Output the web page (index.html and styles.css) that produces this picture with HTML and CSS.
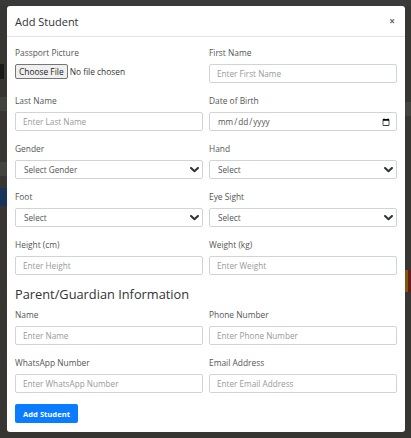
FILE: index.html
```html
<!DOCTYPE html>
<html>
<head>
<meta charset="utf-8">
<link rel="stylesheet" href="styles.css">
</head>
<body>
<div class="backdrop">
  <div class="bg-strip bg-top"></div>
  <div class="bg-strip bg-l1"></div>
  <div class="bg-strip bg-l2"></div>
  <div class="bg-strip bg-l3"></div>
  <div class="bg-strip bg-l4"></div>
  <div class="bg-strip bg-r1"></div>
  <div class="bg-strip bg-r2"></div>
</div>
<div class="modal">
  <div class="modal-header">
    <h5 class="modal-title">Add Student</h5>
    <span class="close">&times;</span>
  </div>
  <form class="modal-body">
    <div class="grid">
      <div class="field">
        <label>Passport Picture</label>
        <input type="file" class="file">
      </div>
      <div class="field">
        <label>First Name</label>
        <input type="text" class="control" placeholder="Enter First Name">
      </div>
      <div class="field">
        <label>Last Name</label>
        <input type="text" class="control" placeholder="Enter Last Name">
      </div>
      <div class="field">
        <label>Date of Birth</label>
        <input type="date" class="control date">
      </div>
      <div class="field">
        <label>Gender</label>
        <div class="select-wrap">
          <select class="control select"><option>Select Gender</option></select>
          <svg class="chev" viewBox="0 0 10 7" width="9" height="6"><path d="M1 1.2 L5 5 L9 1.2" fill="none" stroke="#333" stroke-width="2.4" stroke-linecap="round" stroke-linejoin="round"/></svg>
        </div>
      </div>
      <div class="field">
        <label>Hand</label>
        <div class="select-wrap">
          <select class="control select"><option>Select</option></select>
          <svg class="chev" viewBox="0 0 10 7" width="9" height="6"><path d="M1 1.2 L5 5 L9 1.2" fill="none" stroke="#333" stroke-width="2.4" stroke-linecap="round" stroke-linejoin="round"/></svg>
        </div>
      </div>
      <div class="field">
        <label>Foot</label>
        <div class="select-wrap">
          <select class="control select"><option>Select</option></select>
          <svg class="chev" viewBox="0 0 10 7" width="9" height="6"><path d="M1 1.2 L5 5 L9 1.2" fill="none" stroke="#333" stroke-width="2.4" stroke-linecap="round" stroke-linejoin="round"/></svg>
        </div>
      </div>
      <div class="field">
        <label>Eye Sight</label>
        <div class="select-wrap">
          <select class="control select"><option>Select</option></select>
          <svg class="chev" viewBox="0 0 10 7" width="9" height="6"><path d="M1 1.2 L5 5 L9 1.2" fill="none" stroke="#333" stroke-width="2.4" stroke-linecap="round" stroke-linejoin="round"/></svg>
        </div>
      </div>
      <div class="field">
        <label>Height (cm)</label>
        <input type="text" class="control" placeholder="Enter Height">
      </div>
      <div class="field">
        <label>Weight (kg)</label>
        <input type="text" class="control" placeholder="Enter Weight">
      </div>
    </div>
    <h4 class="section">Parent/Guardian Information</h4>
    <div class="grid">
      <div class="field">
        <label>Name</label>
        <input type="text" class="control" placeholder="Enter Name">
      </div>
      <div class="field">
        <label>Phone Number</label>
        <input type="text" class="control" placeholder="Enter Phone Number">
      </div>
      <div class="field">
        <label>WhatsApp Number</label>
        <input type="text" class="control" placeholder="Enter WhatsApp Number">
      </div>
      <div class="field">
        <label>Email Address</label>
        <input type="text" class="control" placeholder="Enter Email Address">
      </div>
    </div>
    <button type="button" class="btn">Add Student</button>
  </form>
</div>
</body>
</html>
```
FILE: styles.css
```css
* { box-sizing: border-box; }
html, body { margin: 0; padding: 0; }
body {
  width: 411px;
  height: 438px;
  overflow: hidden;
  background: #373632;
  font-family: "Open Sans", "Liberation Sans", sans-serif;
  color: #333;
  padding: 6px 6px 0 7px;
}
.backdrop { position: absolute; inset: 0; z-index: 0; }
.bg-strip { position: absolute; }
.bg-top { left: 0; top: 0; width: 411px; height: 6px; background: #3a3a3a; }
.bg-l1 { left: 0; top: 64px; width: 4px; height: 15px; background: #1a1a18; }
.bg-l2 { left: 0; top: 97px; width: 7px; height: 14px; background: #43433f; }
.bg-l3 { left: 0; top: 162px; width: 7px; height: 14px; background: #43433f; }
.bg-l4 { left: 0; top: 188px; width: 7px; height: 18px; background: #17355a; }
.bg-r1 { left: 405px; top: 102px; width: 6px; height: 14px; background: #43433f; }
.bg-r2 { left: 405px; top: 270px; width: 6px; height: 22px; background: linear-gradient(90deg, #7a5a10 0 50%, #6a1a1a 50%); }

.modal {
  position: relative;
  z-index: 1;
  width: 398px;
  height: 426px;
  background: #fff;
  border-radius: 3px;
  overflow: hidden;
}
.modal-header {
  height: 31px;
  border-bottom: 1px solid #e3e3e3;
  display: flex;
  align-items: center;
  justify-content: space-between;
  padding: 0 10px 0 8px;
}
.modal-title {
  margin: 0;
  font-size: 11px;
  font-weight: 400;
  color: #333;
}
.close {
  font-size: 10px;
  font-weight: 700;
  color: #666;
  line-height: 1;
}
.modal-body {
  padding: 10px 8px 9px 8px;
  display: block;
  margin: 0;
}
.grid {
  display: grid;
  grid-template-columns: 1fr 1fr;
  column-gap: 6px;
}
.field {
  display: flex;
  flex-direction: column;
  margin-bottom: 12px;
}
label {
  font-size: 8.4px;
  line-height: 12px;
  height: 12px;
  color: #555;
  margin-bottom: 5px;
  white-space: nowrap;
}
.control {
  display: block;
  height: 19px;
  width: 100%;
  border: 1px solid #ced4da;
  border-radius: 2px;
  padding: 0 7px;
  font-family: inherit;
  font-size: 8.2px;
  line-height: 17px;
  color: #555;
  background: #fff;
  outline: none;
  margin: 0;
}
.control::placeholder { color: #999; }
.date { padding-right: 6px; color: #555; }
.date::-webkit-calendar-picker-indicator { width: 8px; height: 8px; padding: 0; margin: 0; }
.select-wrap { position: relative; height: 19px; }
.select {
  appearance: none;
  -webkit-appearance: none;
  padding-left: 8px;
  color: #555;
}
.chev { position: absolute; right: 4px; top: 7px; pointer-events: none; }
.file {
  font-family: inherit;
  font-size: 8.4px;
  color: #333;
  height: 15px;
  display: block;
}
.file::file-selector-button {
  font-family: inherit;
  font-size: 8.4px;
  height: 15px;
  padding: 0 3px;
  border: 1px solid #767676;
  border-radius: 2px;
  background: #efefef;
  color: #222;
  margin-right: 2px;
}
.section {
  margin: -2px 0 6px 0;
  font-size: 12.8px;
  line-height: 18px;
  height: 18px;
  font-weight: 400;
  color: #333;
  white-space: nowrap;
}
.btn {
  display: block;
  margin-top: -1px;
  height: 19px;
  width: 63px;
  padding: 0;
  border: none;
  border-radius: 2px;
  background: #0a7cff;
  color: #fff;
  font-family: inherit;
  font-size: 7.6px;
  font-weight: 700;
}
```
